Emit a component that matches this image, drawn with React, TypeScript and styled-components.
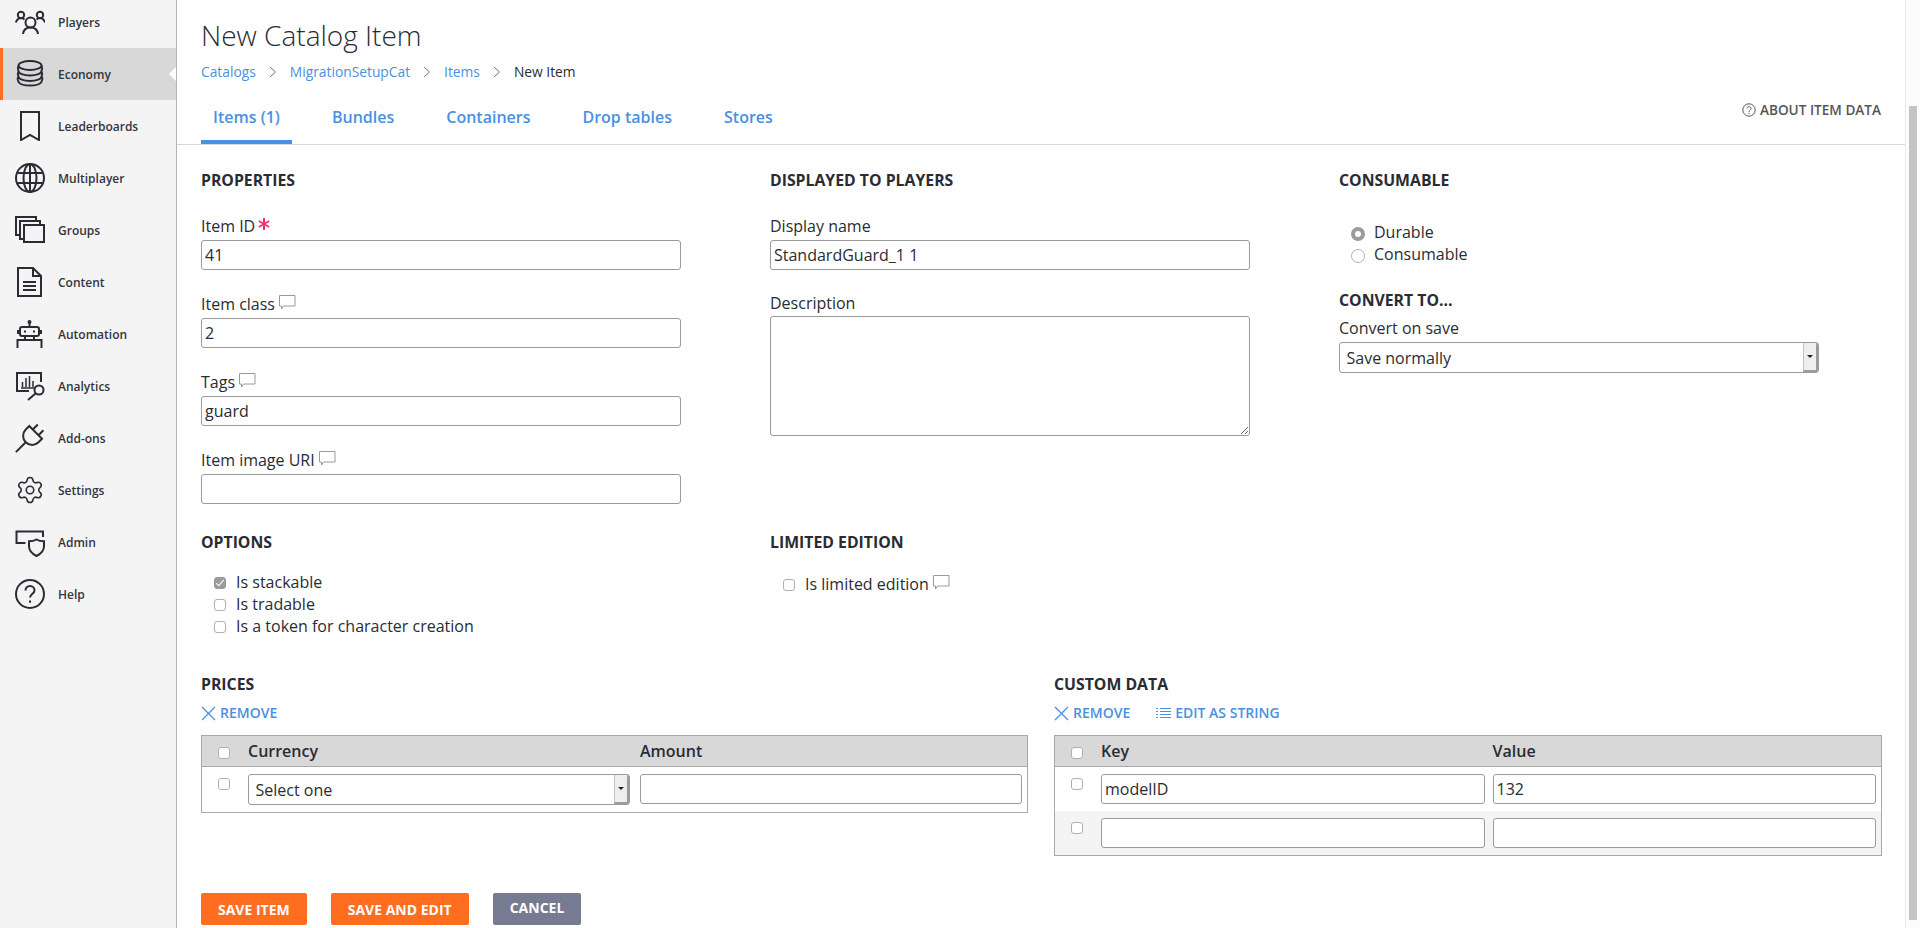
import React from "react";
import styled, { createGlobalStyle } from "styled-components";
import { Settings } from "lucide-react";

const GlobalStyle = createGlobalStyle`
    html, body {
        margin: 0;
        padding: 0;
        height: 100%;
        overflow: hidden;
        background: #fff;
    }
    * {
        box-sizing: border-box;
    }
    body {
        font-family: "Open Sans", "Liberation Sans", sans-serif;
        color: #2a2c33;
    }
`;

const Icon = ({ children }: { children: React.ReactNode }) => (
    <svg width="30" height="30" viewBox="0 0 30 30" fill="none" stroke="currentColor" strokeWidth="2">
        {children}
    </svg>
);

const navItems: { label: string; icon: React.ReactNode }[] = [
    {
        label: "Players",
        icon: (
            <Icon>
                <circle cx="6" cy="8" r="3.200" />
                <circle cx="25" cy="8" r="3.200" />
                <circle cx="15.500" cy="15.500" r="5" />
                <path d="M.8 15.500c1-3 3-4.500 5.200-4.500 1.500 0 2.500.5 3.500 1.500M30 15.500c-1-3-3-4.500-5-4.500-1.500 0-2.500.5-3.500 1.500M8 27c.5-4 3.500-6.500 7.500-6.500s7 2.500 7.500 6.500" />
            </Icon>
        ),
    },
    {
        label: "Economy",
        icon: (
            <Icon>
                <ellipse cx="15" cy="6.500" rx="11.500" ry="4.500" />
                <path d="M3.500 7c-1.500 3 0 4 0 5 0 2.500 5 4.500 11.500 4.500S26.500 14.500 26.500 12c0-1 1.500-2 0-5M3.500 12.500c-1.500 3 0 4 0 5 0 2.500 5 4.500 11.500 4.500s11.500-2 11.500-4.500c0-1 1.500-2 0-5M3 18c-1.500 3 .5 4.500 1 5.500 1.500 2 5.500 3 11 3s9.500-1 11-3c.5-1 2.500-2.500 1-5.500" />
            </Icon>
        ),
    },
    {
        label: "Leaderboards",
        icon: (
            <Icon>
                <path d="M6 1h18v28l-9-5-9 5z" />
            </Icon>
        ),
    },
    {
        label: "Multiplayer",
        icon: (
            <Icon>
                <circle cx="15" cy="15" r="14" />
                <ellipse cx="15" cy="15" rx="6.500" ry="14" />
                <path d="M15 1v28M2.500 10h25M2.500 20h25" />
            </Icon>
        ),
    },
    {
        label: "Groups",
        icon: (
            <Icon>
                <path d="M4 20H1V2h20v3" />
                <path d="M8 24H5V6h20v4" />
                <rect x="9" y="10" width="20" height="17" />
            </Icon>
        ),
    },
    {
        label: "Content",
        icon: (
            <Icon>
                <path d="M3 1h15l8 8v20H3z" />
                <path d="M18 1v8h8M8 15h13M8 19h13M8 23h13" />
            </Icon>
        ),
    },
    {
        label: "Automation",
        icon: (
            <Icon>
                <circle cx="14.500" cy="3" r="1" />
                <path d="M14.500 4v4M2.500 29v-8h24v8M10 17v4M19 17v4M3 11v4M26 11v4" />
                <rect x="5" y="8" width="19" height="9" rx="2" />
                <path d="M9 12.500h2M18 12.500h2" />
            </Icon>
        ),
    },
    {
        label: "Analytics",
        icon: (
            <Icon>
                <path d="M26 11V2H2v18h12" />
                <path d="M6 17h13M7.500 16v-5M11 16V7M14.500 16V5M18 16v-6" strokeWidth="1.500" />
                <circle cx="24" cy="19" r="4.500" />
                <path d="M20.500 22.500L13 29" />
            </Icon>
        ),
    },
    {
        label: "Add-ons",
        icon: (
            <Icon>
                <g transform="rotate(45 15 15)">
                    <path d="M11 0v7M19 0v7M6 7h18v5a9 9 0 0 1-18 0zM15 21v14" />
                </g>
            </Icon>
        ),
    },
    {
        label: "Settings",
        icon: <Settings size={38} strokeWidth={1.250} />,
    },
    {
        label: "Admin",
        icon: (
            <Icon>
                <path d="M28 10V4.500H1.500V16h9" />
                <path d="M21.500 12.500c2 1.200 5 1.800 7.500 1.800v5c0 4.500-3 7.500-7.500 9.700-4.500-2.200-7.500-5.200-7.500-9.700v-5c2.500 0 5.500-.6 7.500-1.800z" />
            </Icon>
        ),
    },
    {
        label: "Help",
        icon: (
            <Icon>
                <circle cx="15" cy="15" r="14" />
                <path d="M10.500 11.500c0-2.500 2-4.500 4.500-4.500s4.500 2 4.500 4.300c0 3.700-4.500 3.700-4.500 7.200" />
                <path d="M15 21.500v2.200" />
            </Icon>
        ),
    },
];

const Comment = () => (
    <CommentIcon width="17" height="15" viewBox="0 0 17 15" fill="none" stroke="#9a9a9a" strokeWidth="1">
        <path d="M.5.5h15.500v10.500H4.500L2.500 14v-3h-2z" />
    </CommentIcon>
);

const Chevron = () => (
    <svg width="8" height="12" viewBox="0 0 8 12" fill="none" stroke="#777" strokeWidth="1">
        <path d="M1 1l5.500 5L1 11" />
    </svg>
);

const RemoveLink = () => (
    <ActionLink>
        <svg width="15" height="15" viewBox="0 0 15 15" fill="none" stroke="#4a90e2" strokeWidth="1.300">
            <path d="M1 1l13 13M14 1L1 14" />
        </svg>
        Remove
    </ActionLink>
);

const App = () => {
    return (
        <Page>
            <GlobalStyle />
            <Sidebar>
                {navItems.map((item) => (
                    <NavItem key={item.label} $active={item.label === "Economy"}>
                        <NavIcon>{item.icon}</NavIcon>
                        {item.label}
                    </NavItem>
                ))}
            </Sidebar>
            <Main>
                <Header>
                    <Title>New Catalog Item</Title>
                    <Breadcrumb>
                        <Crumb>Catalogs</Crumb>
                        <Chevron />
                        <Crumb>MigrationSetupCat</Crumb>
                        <Chevron />
                        <Crumb>Items</Crumb>
                        <Chevron />
                        <CurrentCrumb>New Item</CurrentCrumb>
                    </Breadcrumb>
                    <TabRow>
                        <Tabs>
                            <Tab $active>Items (1)</Tab>
                            <Tab>Bundles</Tab>
                            <Tab>Containers</Tab>
                            <Tab>Drop tables</Tab>
                            <Tab>Stores</Tab>
                        </Tabs>
                        <AboutLink>
                            <svg width="14" height="14" viewBox="0 0 14 14" fill="none" stroke="#555" strokeWidth="1">
                                <circle cx="7" cy="7" r="6.200" />
                                <path d="M5 5.500C5 4.300 6 3.600 7 3.600s2 .8 2 1.900c0 1.700-2 1.700-2 3.300M7 9.800v1.200" />
                            </svg>
                            About item data
                        </AboutLink>
                    </TabRow>
                </Header>
                <Form>
                    <TopGrid>
                        <Column>
                            <Heading>Properties</Heading>
                            <Field>
                                <Label>
                                    Item ID
                                    <Required width="12" height="12" viewBox="0 0 12 12" stroke="#f0346f" strokeWidth="2">
                                        <path d="M6 0v12M.8 3l10.400 6M11.200 3L.8 9" />
                                    </Required>
                                </Label>
                                <TextInput defaultValue="41" />
                            </Field>
                            <Field>
                                <Label>
                                    Item class
                                    <Comment />
                                </Label>
                                <TextInput defaultValue="2" />
                            </Field>
                            <Field>
                                <Label>
                                    Tags
                                    <Comment />
                                </Label>
                                <TextInput defaultValue="guard" />
                            </Field>
                            <Field>
                                <Label>
                                    Item image URI
                                    <Comment />
                                </Label>
                                <TextInput />
                            </Field>
                        </Column>
                        <Column>
                            <Heading>Displayed to players</Heading>
                            <Field>
                                <Label>Display name</Label>
                                <TextInput defaultValue="StandardGuard_1 1" />
                            </Field>
                            <DescriptionField>
                                <DescriptionLabel>Description</DescriptionLabel>
                                <TextArea />
                            </DescriptionField>
                        </Column>
                        <Column>
                            <Heading>Consumable</Heading>
                            <RadioList>
                                <OptionRow>
                                    <Radio $checked />
                                    Durable
                                </OptionRow>
                                <OptionRow>
                                    <Radio />
                                    Consumable
                                </OptionRow>
                            </RadioList>
                            <ConvertHeading>Convert to...</ConvertHeading>
                            <ConvertLabel>Convert on save</ConvertLabel>
                            <SelectBox>
                                <SelectText>Save normally</SelectText>
                                <SelectArrow />
                            </SelectBox>
                        </Column>
                    </TopGrid>
                    <OptionsGrid>
                        <div>
                            <Heading>Options</Heading>
                            <OptionList>
                                <OptionRow>
                                    <Checkbox $checked />
                                    Is stackable
                                </OptionRow>
                                <OptionRow>
                                    <Checkbox />
                                    Is tradable
                                </OptionRow>
                                <OptionRow>
                                    <Checkbox />
                                    Is a token for character creation
                                </OptionRow>
                            </OptionList>
                        </div>
                        <div>
                            <Heading>Limited edition</Heading>
                            <LimitedList>
                                <OptionRow>
                                    <Checkbox />
                                    Is limited edition
                                    <Comment />
                                </OptionRow>
                            </LimitedList>
                        </div>
                    </OptionsGrid>
                    <TablesGrid>
                        <div>
                            <Heading>Prices</Heading>
                            <Actions>
                                <RemoveLink />
                            </Actions>
                            <Table>
                                <HeadRow $gap={10}>
                                    <Checkbox />
                                    <span>Currency</span>
                                    <span>Amount</span>
                                </HeadRow>
                                <BodyRow $gap={10}>
                                    <RowCheck />
                                    <SelectBox>
                                        <SelectText>Select one</SelectText>
                                        <SelectArrow />
                                    </SelectBox>
                                    <TextInput />
                                </BodyRow>
                            </Table>
                        </div>
                        <div>
                            <Heading>Custom data</Heading>
                            <Actions>
                                <RemoveLink />
                                <ActionLink>
                                    <svg width="15" height="12" viewBox="0 0 15 12" fill="none" stroke="#4a90e2" strokeWidth="1.200">
                                        <path d="M0 1.500h2M0 4.500h2M0 7.500h2M0 10.500h2M4 1.500h11M4 4.500h11M4 7.500h11M4 10.500h11" />
                                    </svg>
                                    Edit as string
                                </ActionLink>
                            </Actions>
                            <Table>
                                <HeadRow $gap={8}>
                                    <Checkbox />
                                    <span>Key</span>
                                    <span>Value</span>
                                </HeadRow>
                                <BodyRow $gap={8}>
                                    <RowCheck />
                                    <TextInput defaultValue="modelID" />
                                    <TextInput defaultValue="132" />
                                </BodyRow>
                                <BodyRow $gap={8} $shaded>
                                    <RowCheck />
                                    <TextInput />
                                    <TextInput />
                                </BodyRow>
                            </Table>
                        </div>
                    </TablesGrid>
                    <Buttons>
                        <Button>Save item</Button>
                        <Button>Save and edit</Button>
                        <Button $secondary>Cancel</Button>
                    </Buttons>
                </Form>
            </Main>
            <ScrollTrack>
                <ScrollThumb />
            </ScrollTrack>
        </Page>
    );
};

export default App;

const Page = styled.div`
    display: flex;
    height: 928px;
    overflow: hidden;
`;

const Sidebar = styled.nav`
    flex: 0 0 177px;
    background: #f4f4f4;
    border-right: 1.5px solid #b5b5b5;
    display: flex;
    flex-direction: column;
    margin-top: -4px;
`;

const NavItem = styled.a<{ $active?: boolean }>`
    position: relative;
    height: 52px;
    display: flex;
    align-items: center;
    gap: 13px;
    padding-left: 15px;
    font-size: 12px;
    font-weight: 600;
    color: #33363f;
    background: ${(props) => (props.$active ? "#d8d8d8" : "transparent")};
    box-shadow: ${(props) => (props.$active ? "inset 3px 0 0 #ff6d21" : "none")};

    &::after {
        content: "";
        display: ${(props) => (props.$active ? "block" : "none")};
        position: absolute;
        right: 0;
        top: 19px;
        border-style: solid;
        border-width: 7px 7px 7px 0;
        border-color: transparent #fff transparent transparent;
    }
`;

const NavIcon = styled.span`
    flex: 0 0 30px;
    min-width: 0;
    height: 30px;
    display: flex;
    align-items: center;
    justify-content: center;
    color: #2a2c33;
`;

const Main = styled.main`
    flex: 1;
    min-width: 0;
`;

const Header = styled.header`
    height: 145px;
    padding: 17px 24px 0;
    border-bottom: 1px solid #d8d8d8;
`;

const Title = styled.h1`
    margin: 0;
    font-size: 28px;
    line-height: 36px;
    font-weight: 300;
    color: #2a2c33;
`;

const Breadcrumb = styled.div`
    display: flex;
    align-items: center;
    gap: 13px;
    margin-top: 9px;
    font-size: 13.8px;
    line-height: 20px;
`;

const Crumb = styled.a`
    color: #4a90e2;
`;

const CurrentCrumb = styled.span`
    color: #2a2c33;
`;

const TabRow = styled.div`
    display: flex;
    justify-content: space-between;
    margin-top: 24px;
`;

const Tabs = styled.div`
    display: flex;
    gap: 28px;
`;

const Tab = styled.a<{ $active?: boolean }>`
    padding: 0 12px 12px;
    height: 38px;
    font-size: 16px;
    line-height: 22px;
    font-weight: 600;
    color: #4a90e2;
    border-bottom: 4px solid ${(props) => (props.$active ? "#4a90e2" : "transparent")};
`;

const AboutLink = styled.a`
    display: flex;
    align-items: center;
    gap: 4px;
    margin-top: -4px;
    height: 16px;
    font-size: 13.6px;
    line-height: 16px;
    font-weight: 600;
    text-transform: uppercase;
    color: #555;
`;

const Form = styled.div`
    padding: 25px 21px 0 24px;
`;

const TopGrid = styled.div`
    display: grid;
    grid-template-columns: repeat(3, 480px);
    column-gap: 89px;
    height: 334px;
`;

const Column = styled.div`
    display: flex;
    flex-direction: column;
`;

const Heading = styled.h2`
    margin: 0;
    font-size: 15.8px;
    line-height: 20px;
    font-weight: 700;
    text-transform: uppercase;
    color: #2a2c33;
`;

const Field = styled.div`
    margin-top: 25px;

    & + & {
        margin-top: 23px;
    }
`;

const DescriptionField = styled.div`
    margin-top: 22px;
`;

const Label = styled.label`
    display: flex;
    align-items: flex-start;
    height: 25px;
    font-size: 16px;
    line-height: 22px;
    color: #2a2c33;
`;

const DescriptionLabel = styled(Label)`
    height: 24px;
`;

const CommentIcon = styled.svg`
    margin-left: 4px;
    margin-top: 2px;
    flex: none;
    align-self: flex-start;
`;

const Required = styled.svg`
    margin-left: 3px;
    margin-top: 3px;
`;

const TextInput = styled.input`
    display: block;
    width: 100%;
    height: 30px;
    padding: 0 3px;
    border: 1px solid #9b9b9b;
    border-radius: 3px;
    background: #fff;
    font-family: inherit;
    font-size: 16px;
    color: #2a2c33;
    outline: none;
`;

const TextArea = styled.textarea`
    display: block;
    width: 100%;
    height: 120px;
    border: 1px solid #9b9b9b;
    border-radius: 3px;
    background: #fff;
    outline: none;
    resize: vertical;
`;

const RadioList = styled.div`
    margin-top: 31px;
    padding-left: 12px;
`;

const OptionRow = styled.div`
    display: flex;
    align-items: center;
    height: 22px;
    font-size: 16px;
    line-height: 22px;
    color: #2a2c33;
`;

const Radio = styled.span<{ $checked?: boolean }>`
    flex: none;
    width: 14px;
    height: 14px;
    margin: 3px 9px 0 0;
    border-radius: 50%;
    border: ${(props) => (props.$checked ? "4.5px solid #9b9b9b" : "1px solid #b0b0b0")};
    background: #fff;
`;

const ConvertHeading = styled(Heading)`
    margin-top: 25px;
`;

const ConvertLabel = styled(Label)`
    margin-top: 7px;
`;

const SelectBox = styled.div`
    display: flex;
    align-items: stretch;
    height: 31px;
    border: 1px solid #9b9b9b;
    border-radius: 3px;
    background: #fff;
    overflow: hidden;
`;

const SelectText = styled.span`
    flex: 1;
    padding-left: 6.5px;
    font-size: 16px;
    line-height: 30px;
    color: #2a2c33;
`;

const SelectArrow = styled.span`
    flex: 0 0 15px;
    display: flex;
    align-items: center;
    justify-content: center;
    background: #eeeeee;
    border-left: 1px solid #c4c4c4;
    border-right: 2px solid #9b9b9b;
    border-bottom: 2px solid #9b9b9b;

    &::before {
        content: "";
        border-style: solid;
        border-width: 3px 3px 0;
        border-color: #222 transparent transparent;
    }
`;

const OptionsGrid = styled.div`
    display: grid;
    grid-template-columns: 480px 480px;
    column-gap: 89px;
    height: 105px;
    margin-top: 28px;
`;

const OptionList = styled.div`
    margin-top: 19px;
    padding-left: 13px;
`;

const LimitedList = styled(OptionList)`
    margin-top: 21px;
`;

const Checkbox = styled.span<{ $checked?: boolean }>`
    flex: none;
    position: relative;
    width: 12px;
    height: 12px;
    margin-right: 10px;
    margin-top: 2px;
    border: 1px solid ${(props) => (props.$checked ? "#9b9b9b" : "#b0b0b0")};
    border-radius: 3px;
    background: ${(props) => (props.$checked ? "#9b9b9b" : "#fff")};

    &::after {
        content: "";
        display: ${(props) => (props.$checked ? "block" : "none")};
        position: absolute;
        left: 3px;
        top: 0;
        width: 3px;
        height: 7px;
        border: solid #fff;
        border-width: 0 1.5px 1.5px 0;
        transform: rotate(40deg);
    }
`;

const RowCheck = styled(Checkbox)`
    margin: 4px 0 0 16px;
`;

const TablesGrid = styled.div`
    display: grid;
    grid-template-columns: 827px 828px;
    column-gap: 26px;
    margin-top: 37px;
    align-items: start;
`;

const Actions = styled.div`
    display: flex;
    gap: 26px;
    margin-top: 11px;
    height: 16px;
`;

const ActionLink = styled.a`
    display: flex;
    align-items: center;
    gap: 4px;
    font-size: 14px;
    line-height: 16px;
    font-weight: 600;
    text-transform: uppercase;
    color: #4a90e2;
`;

const Table = styled.div`
    margin-top: 14px;
    border: 1px solid #a8a8a8;
`;

const HeadRow = styled.div<{ $gap: number }>`
    display: grid;
    grid-template-columns: ${(props) => 46 - props.$gap}px 1fr 1fr;
    column-gap: ${(props) => props.$gap}px;
    align-items: center;
    height: 31px;
    padding-right: 5px;
    background: #d8d8d8;
    border-bottom: 1px solid #a8a8a8;
    font-size: 16px;
    font-weight: 600;
    color: #2a2c33;

    & > ${Checkbox} {
        margin: 3px 0 0 16px;
    }
`;

const BodyRow = styled.div<{ $gap: number; $shaded?: boolean }>`
    display: grid;
    grid-template-columns: ${(props) => 46 - props.$gap}px 1fr 1fr;
    column-gap: ${(props) => props.$gap}px;
    align-items: start;
    padding: 7px 5px 7px 0;
    background: ${(props) => (props.$shaded ? "#f4f4f4" : "#fff")};
`;

const Buttons = styled.div`
    display: flex;
    gap: 24px;
    margin-top: 37px;
`;

const Button = styled.button<{ $secondary?: boolean }>`
    height: 32px;
    padding: 0 17px ${(props) => (props.$secondary ? "3px" : "0")};
    border: none;
    border-radius: 2px;
    background: ${(props) => (props.$secondary ? "#767b91" : "#ff6d21")};
    font-family: inherit;
    font-size: 14px;
    font-weight: 700;
    text-transform: uppercase;
    color: #fff;
`;

const ScrollTrack = styled.div`
    flex: 0 0 15px;
    display: flex;
    padding: 106px 3px 8px 3px;
    background: #fcfcfc;
    border-left: 1px solid #e8e8e8;
`;

const ScrollThumb = styled.div`
    flex: 1;
    background: #c4c4c4;
`;
